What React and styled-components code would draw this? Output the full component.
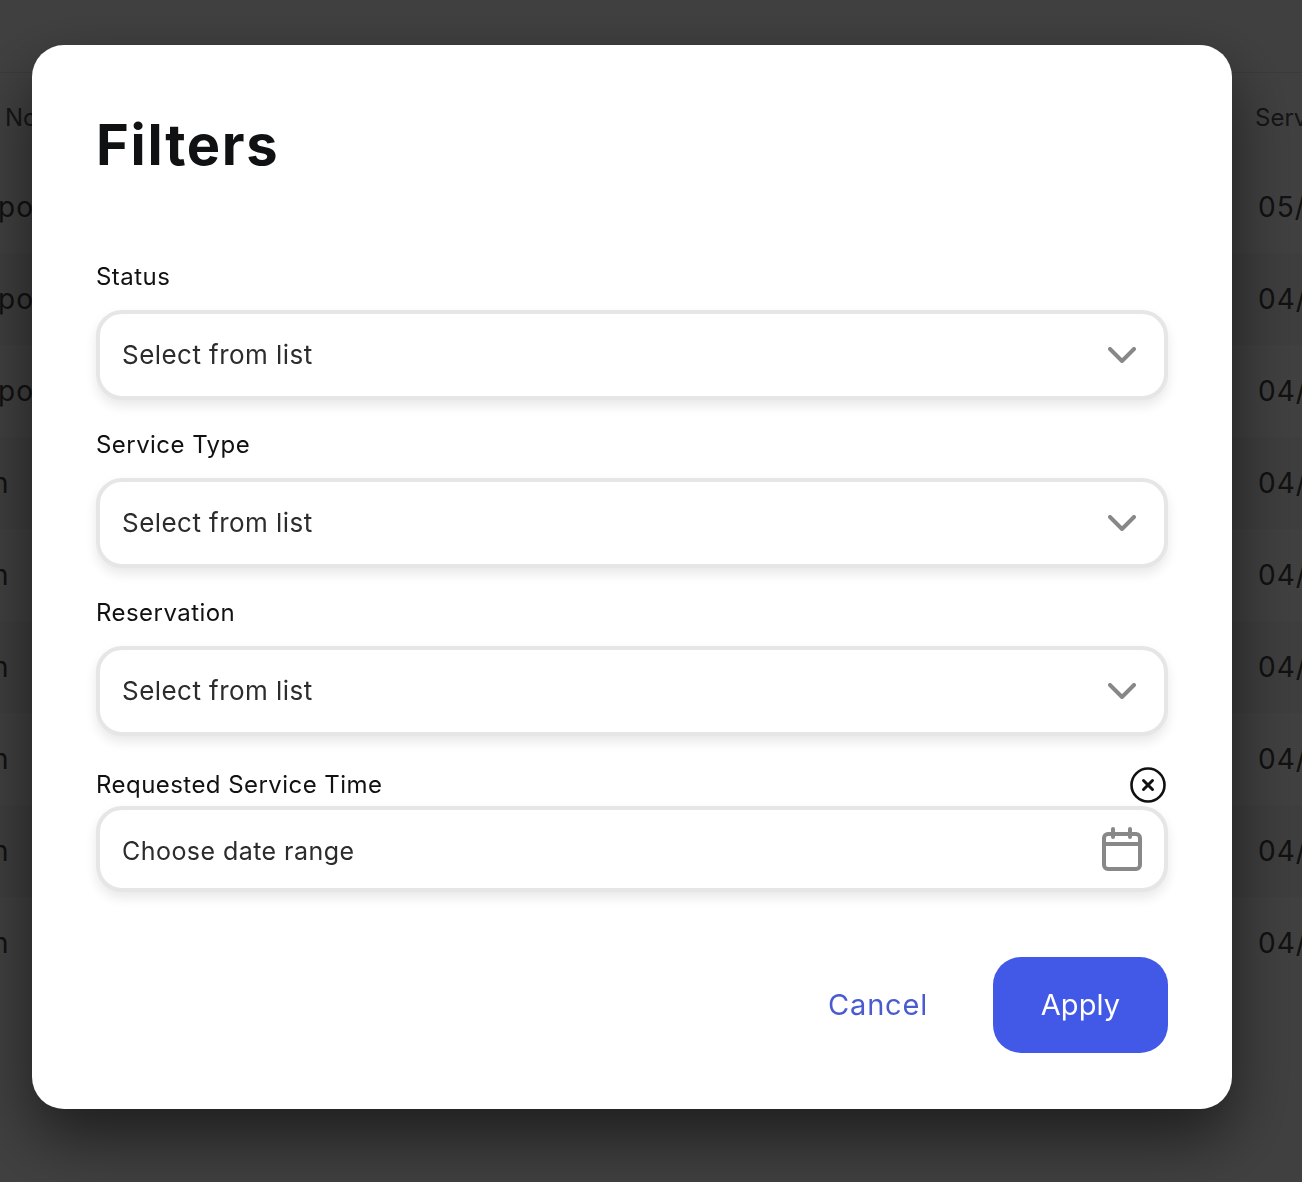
import React from 'react';
import styled, { createGlobalStyle } from 'styled-components';

const GlobalStyle = createGlobalStyle`
    html, body {
        margin:0;
        padding:0;
        height:100%;
        overflow:hidden;
        background:#fff;
        font-family:"Inter","Noto Sans",sans-serif;
    }
`;

// table behind the dialog
const Page = styled.div`
    width:1302px;
    height:1182px;
    overflow:hidden;
`;
const TopBar = styled.div`
    height:72px;
    border-bottom:1px solid #e8e8e8;
`;
const TableHead = styled.div`
    height:88px;
    display:flex;
    justify-content:space-between;
    align-items:center;
    color:#555;
    font-size:24px;
    box-sizing:border-box;
`;
const Row = styled.div`
    height:92px;
    display:flex;
    justify-content:space-between;
    align-items:center;
    color:#444;
    font-size:28px;
    letter-spacing:1px;
    background:${p => (p.$shaded ? '#f5f5f5' : '#fff')};
`;
const LeadCell = styled.span`
    margin-left:${p => p.$offset}px;
    white-space:nowrap;
`;
const TrailCell = styled.span`
    width:${p => p.$width}px;
    white-space:nowrap;
`;

// dialog
const Overlay = styled.div`
    position:fixed;
    inset:0;
    background:rgba(0,0,0,0.75);
    display:flex;
    justify-content:flex-start;
    align-items:flex-start;
    padding:45px 0 0 32px;
`;
const Modal = styled.div`
    width:1200px;
    height:1064px;
    box-sizing:border-box;
    padding:64px 64px 56px;
    background:#fff;
    border-radius:32px;
    box-shadow:0 28px 64px rgba(0,0,0,0.55);
    display:flex;
    flex-direction:column;
`;
const Title = styled.h1`
    margin:0 0 78px;
    height:72px;
    line-height:72px;
    font-size:56px;
    font-weight:700;
    letter-spacing:1.7px;
    color:#101112;
`;
const Field = styled.div`
    margin-bottom:${p => p.$last ? '65px' : '27px'};
    margin-top:${p => p.$last ? '4px' : '0'};
`;
const LabelRow = styled.div`
    height:36px;
    display:flex;
    justify-content:space-between;
    align-items:center;
    margin-bottom:${p => p.$tight ? '3px' : '15px'};
`;
const Label = styled.label`
    font-size:24px;
    letter-spacing:0.45px;
    padding-bottom:2px;
    color:#111;
`;
const ClearButton = styled.button`
    width:36px;
    height:36px;
    margin-right:2px;
    padding:0;
    border:none;
    background:none;
    display:flex;
`;
const SelectBox = styled.div`
    height:${p => p.$height}px;
    box-sizing:border-box;
    border:4px solid #e6e6e6;
    border-radius:26px;
    box-shadow:0 6px 12px rgba(0,0,0,0.09);
    background:#fff;
    display:flex;
    align-items:center;
    justify-content:space-between;
    padding:0 ${p => p.$padRight}px 0 22px;
`;
const ValueText = styled.span`
    color:#2c2c2c;
    font-size:${p => p.$small ? '25px' : '26px'};
    letter-spacing:0.45px;
    padding:${p => p.$small ? '4px 0 0' : '0 0 1px'};
`;
const Actions = styled.div`
    display:flex;
    justify-content:flex-end;
    align-items:center;
    gap:65px;
`;
const CancelButton = styled.button`
    padding:0 0 2px;
    border:none;
    background:none;
    font:inherit;
    font-size:29px;
    letter-spacing:0.8px;
    color:#4a5bd0;
`;
const ApplyButton = styled.button`
    width:175px;
    height:96px;
    padding:0 0 2px;
    border:none;
    border-radius:28px;
    background:#4259e8;
    font:inherit;
    font-size:29px;
    letter-spacing:0.1px;
    color:#fff;
`;

const Chevron = () => (
    <svg width="28" height="16" viewBox="0 0 28 16" fill="none">
        <path d="M2 2L14 14L26 2" stroke="#888" strokeWidth="4" strokeLinecap="round" strokeLinejoin="round"/>
    </svg>
);

const CalendarIcon = () => (
    <svg width="40" height="44" viewBox="0 0 40 44" fill="none" stroke="#888" strokeWidth="4" strokeLinecap="round">
        <rect x="2" y="7" width="36" height="35" rx="4"/>
        <path d="M2 17H38"/>
        <path d="M11 2V10M28 2V10"/>
    </svg>
);

const ClearIcon = () => (
    <svg width="36" height="36" viewBox="0 0 36 36" fill="none" stroke="#111">
        <circle cx="18" cy="18" r="16.5" strokeWidth="2.6"/>
        <path d="M13.5 13.5L22.5 22.5M22.5 13.5L13.5 22.5" strokeWidth="3" strokeLinecap="round"/>
    </svg>
);

const rows = [
    { lead: 'po', offset: -2, date: '05/' },
    { lead: 'po', offset: -2, date: '04/' },
    { lead: 'po', offset: -2, date: '04/' },
    { lead: 'n', offset: -8, date: '04/' },
    { lead: 'n', offset: -8, date: '04/' },
    { lead: 'n', offset: -8, date: '04/' },
    { lead: 'n', offset: -8, date: '04/' },
    { lead: 'n', offset: -8, date: '04/' },
    { lead: 'n', offset: -8, date: '04/' },
];

const selects = ['Status', 'Service Type', 'Reservation'];

function App() {
    return (
        <>
        <GlobalStyle/>
        <Page>
            <TopBar/>
            <TableHead>
                <LeadCell $offset={5}>No</LeadCell>
                <TrailCell $width={47}>Serv</TrailCell>
            </TableHead>
            {rows.map((row, i) => (
                <Row key={i} $shaded={i % 2 === 1}>
                    <LeadCell $offset={row.offset}>{row.lead}</LeadCell>
                    <TrailCell $width={44}>{row.date}</TrailCell>
                </Row>
            ))}
        </Page>
        <Overlay>
            <Modal>
                <Title>Filters</Title>
                {selects.map(name => (
                    <Field key={name}>
                        <LabelRow><Label>{name}</Label></LabelRow>
                        <SelectBox $height={90} $padRight={28}>
                            <ValueText>Select from list</ValueText>
                            <Chevron/>
                        </SelectBox>
                    </Field>
                ))}
                <Field $last>
                    <LabelRow $tight>
                        <Label>Requested Service Time</Label>
                        <ClearButton><ClearIcon/></ClearButton>
                    </LabelRow>
                    <SelectBox $height={86} $padRight={22}>
                        <ValueText $small>Choose date range</ValueText>
                        <CalendarIcon/>
                    </SelectBox>
                </Field>
                <Actions>
                    <CancelButton>Cancel</CancelButton>
                    <ApplyButton>Apply</ApplyButton>
                </Actions>
            </Modal>
        </Overlay>
        </>
    );
}
export default App;
